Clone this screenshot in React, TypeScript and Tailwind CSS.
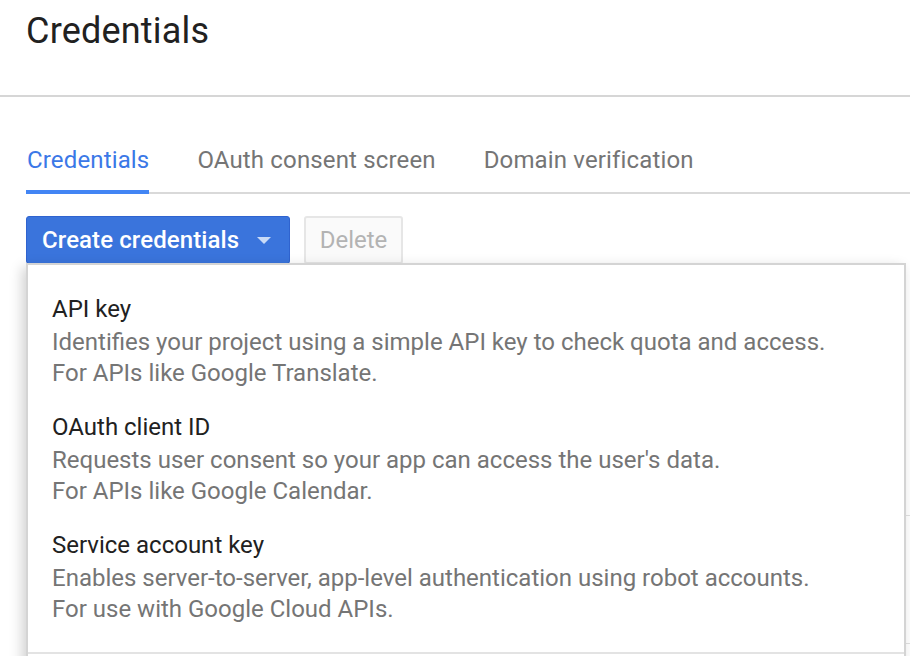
import React from 'react'

const items = [
  {
    title: 'API key',
    lines: [
      'Identifies your project using a simple API key to check quota and access.',
      'For APIs like Google Translate.',
    ],
  },
  {
    title: 'OAuth client ID',
    lines: [
      "Requests user consent so your app can access the user's data.",
      'For APIs like Google Calendar.',
    ],
  },
  {
    title: 'Service account key',
    lines: [
      'Enables server-to-server, app-level authentication using robot accounts.',
      'For use with Google Cloud APIs.',
    ],
  },
]

function Tabs() {
  const tabs = ['Credentials', 'OAuth consent screen', 'Domain verification']
  return (
    <div className="ml-[26px] flex gap-[48px] border-b-2 border-[#d9d9d9] pt-[47px]">
      {tabs.map((t, i) => (
        <div
          key={t}
          className={
            i === 0
              ? 'mb-[-2px] border-b-4 border-[#4285f4] pb-[12px] pl-[1px] text-[#3b78e7]'
              : 'pb-[16px] text-[#757575]'
          }
        >
          <span className="block text-[24px] leading-[32px] tracking-[0.15px]">{t}</span>
        </div>
      ))}
    </div>
  )
}

export default function App() {
  return (
    <div
      className="relative h-[656px] w-[910px] overflow-hidden bg-white"
      style={{ fontFamily: 'Roboto, "Noto Sans", sans-serif' }}
    >
      <div className="h-[97px] border-b-2 border-[#d6d6d6] pl-[26px] pt-[9px]">
        <h1 className="text-[36px] leading-[44px] tracking-[0.2px] text-[#212121]">Credentials</h1>
      </div>

      <Tabs />

      <div className="ml-[26px] mt-[22px] flex gap-[14px]">
        <button className="flex h-[48px] w-[264px] items-center rounded-[3px] border border-[#2f63cf] bg-[#3a74dc] pl-[15px] text-[24px] font-medium tracking-[0.1px] text-white">
          Create credentials
          <svg width="14" height="7" viewBox="0 0 14 7" className="ml-[18px]">
            <path d="M0 0 L14 0 L7 7 Z" fill="#c9dbf7" />
          </svg>
        </button>
        <button className="h-[48px] w-[99px] rounded-[3px] border-2 border-[#e6e6e6] bg-[#fafafa] text-[24px] text-[#b3b3b3]">
          Delete
        </button>
      </div>

      {/* table behind the menu */}
      <div className="ml-[26px] mt-[30px]">
        <div className="h-[222px] border-b border-[#e0e0e0]" />
        <div className="h-[128px] border-b border-[#e0e0e0]" />
      </div>

      {/* dropdown menu */}
      <div className="absolute left-[26px] top-[263px] w-[880px] border-2 border-[#d4d4d4] bg-white pt-[17px] shadow-[-4px_4px_12px_rgba(0,0,0,0.18)]">
        {items.map((it) => (
          <div key={it.title} className="pb-[11px] pl-[24px] pt-[12px] text-[24px]">
            <div className="leading-[30px] text-[#212121]">{it.title}</div>
            <div className="mt-[3px] leading-[31px] text-[#757575]">
              {it.lines.map((l) => (
                <div key={l}>{l}</div>
              ))}
            </div>
          </div>
        ))}
        <div className="mt-[16px] h-[40px] border-t-2 border-[#e3e3e3]" />
      </div>
    </div>
  )
}
